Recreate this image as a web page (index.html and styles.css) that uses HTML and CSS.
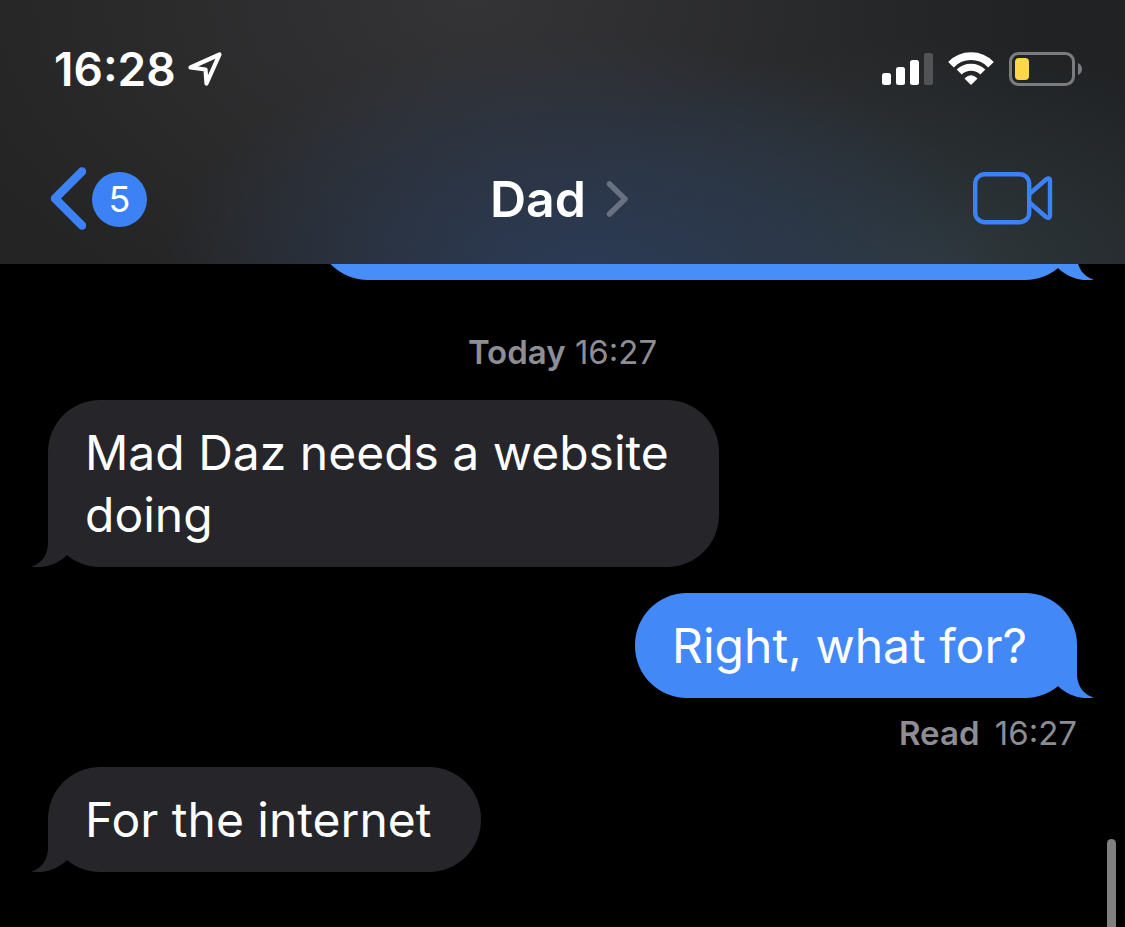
FILE: index.html
```
<!DOCTYPE html>
<html lang="en">
<head>
    <meta charset="UTF-8">
    <meta name="viewport" content="width=device-width, initial-scale=1">
    <title>Messages | Dad</title>
    <link rel="stylesheet" href="styles.css">
</head>
<body>
<header class="header">
    <div class="status">
        <div class="status-left">
            <time class="clock">16:28</time>
            <svg width="36" height="36" viewBox="0 0 36 36" fill="none" stroke="#fff" stroke-width="4.200" stroke-linejoin="round">
                <path d="M2.500 16.500 L31.500 3.500 L18.500 32.500 L17.500 18.500 Z"/>
            </svg>
        </div>
        <div class="status-right">
            <svg width="52" height="34" viewBox="0 0 52 34" fill="#fff">
                <rect x="1" y="21" width="9" height="12" rx="2.500"/>
                <rect x="15" y="15" width="9" height="18" rx="2.500"/>
                <rect x="29" y="8" width="9" height="25" rx="2.500"/>
                <rect x="43" y="1" width="9" height="32" rx="2.500" fill="#525355"/>
            </svg>
            <svg width="46" height="34" viewBox="0 0 46 34" fill="none" stroke="#fff" stroke-width="7.800">
                <path d="M3 12.700 A27.800 27.800 0 0 1 43 12.700"/>
                <path d="M11.200 20 A17 17 0 0 1 34.800 20" stroke-width="7.200"/>
                <path d="M17 26.500 Q23 21 29 26.500 L23 32.500 Z" fill="#fff" stroke-width="1" stroke-linejoin="round"/>
            </svg>
            <svg width="74" height="34" viewBox="0 0 74 34">
                <rect x="1.500" y="1.500" width="63" height="31" rx="8" fill="none" stroke="#7b7c7e" stroke-width="3"/>
                <rect x="6" y="6" width="14" height="22" rx="4" fill="#fbd749"/>
                <path d="M69 11 Q73 13 73 17 Q73 21 69 23 Z" fill="#7b7c7e"/>
            </svg>
        </div>
    </div>
    <nav class="nav">
        <button class="back" type="button" aria-label="Back, 5 unread">
            <svg width="36" height="64" viewBox="0 0 36 64" fill="none" stroke="currentColor" stroke-width="8.500" stroke-linecap="round" stroke-linejoin="round">
                <path d="M32 4.500 L5 31.500 L32 58.500"/>
            </svg>
            <span class="badge">5</span>
        </button>
        <button class="contact" type="button">
            Dad
            <svg width="23" height="38" viewBox="0 0 23 38" fill="none" stroke="#697180" stroke-width="5.500" stroke-linecap="round" stroke-linejoin="round">
                <path d="M3.500 4 L19 19 L3.500 34"/>
            </svg>
        </button>
        <button class="video" type="button" aria-label="FaceTime">
            <svg width="80" height="54" viewBox="0 0 80 54" fill="none" stroke="currentColor" stroke-width="4.400" stroke-linejoin="round">
                <rect x="2.200" y="2.200" width="54" height="48" rx="9.500"/>
                <path d="M57 21.500 L73 7.500 Q77 5 77 9 V43 Q77 47.500 73 45 L57 31"/>
            </svg>
        </button>
    </nav>
</header>

<main class="chat">
    <div class="bubble sent scrolled">
        <svg class="tail" width="54" height="53" viewBox="0 0 54 53"><path d="M37 0 V29 C37 40 43 50 54 52.500 C41 55 27 50 18 41 L0 20 V0 Z"/></svg>
    </div>
    <p class="stamp"><b>Today</b> 16:27</p>
    <div class="bubble received">
        Mad Daz needs a website<br>doing
        <svg class="tail" width="54" height="53" viewBox="0 0 54 53"><path d="M17 0 V29 C17 40 11 50 0 52.500 C13 55 27 50 36 41 L54 20 V0 Z"/></svg>
    </div>
    <div class="bubble sent">
        Right, what for?
        <svg class="tail" width="54" height="53" viewBox="0 0 54 53"><path d="M37 0 V29 C37 40 43 50 54 52.500 C41 55 27 50 18 41 L0 20 V0 Z"/></svg>
    </div>
    <p class="receipt"><b>Read</b> 16:27</p>
    <div class="bubble received">
        For the internet
        <svg class="tail" width="54" height="53" viewBox="0 0 54 53"><path d="M17 0 V29 C17 40 11 50 0 52.500 C13 55 27 50 36 41 L54 20 V0 Z"/></svg>
    </div>
    <div class="scrollbar"></div>
</main>
</body>
</html>
```
FILE: styles.css
```
* {
    box-sizing: border-box;
}

body {
    margin: 0;
    min-height: 100vh;
    display: flex;
    flex-direction: column;
    background: #000;
    color: #fff;
    font-family: Inter, "Liberation Sans", sans-serif;
}

button {
    padding: 0;
    border: 0;
    background: none;
    font-family: inherit;
    cursor: pointer;
}

svg {
    display: block;
    flex-shrink: 0;
}

/* Header */
.header {
    position: relative;
    z-index: 1;
    background:
        radial-gradient(ellipse 38% 95% at 52% 108%, rgba(44, 62, 92, 0.9), rgba(44, 62, 92, 0.5) 50%, rgba(44, 62, 92, 0)),
        radial-gradient(ellipse 36% 90% at 82% 105%, rgba(50, 62, 66, 0.8), rgba(50, 62, 66, 0)),
        radial-gradient(ellipse 50% 140% at 42% 0%, #343436, rgba(52, 52, 54, 0)),
        linear-gradient(to right, #242424, #202224);
}

.status {
    display: flex;
    justify-content: space-between;
    align-items: center;
    height: 138px;
    padding: 0 42px 0 54px;
}

.status-left {
    display: flex;
    align-items: center;
    gap: 12px;
}

.status-right {
    display: flex;
    align-items: center;
    gap: 15px;
}

.clock {
    font-size: 46px;
    font-weight: 600;
}

.nav {
    display: grid;
    grid-template-columns: 1fr auto 1fr;
    align-items: center;
    height: 126px;
    padding: 0 56px 4px 50px;
}

.back {
    display: flex;
    align-items: center;
    justify-self: start;
    gap: 6px;
    color: #3c82f6;
}

.badge {
    width: 55px;
    height: 55px;
    border-radius: 50%;
    background: #3c82f6;
    color: #fff;
    font-size: 36px;
    line-height: 55px;
}

.contact {
    display: flex;
    align-items: center;
    gap: 20px;
    color: #fff;
    font-size: 50px;
    font-weight: 600;
}

.video {
    justify-self: end;
    padding-right: 16px;
    color: #3c82f6;
}

/* Messages */
.chat {
    position: relative;
    flex: 1;
    display: flex;
    flex-direction: column;
    padding: 0 48px 55px;
}

.bubble {
    position: relative;
    max-width: 66%;
    min-height: 104px;
    padding: 22px 50px 21px 37px;
    border-radius: 52px;
    font-size: 48px;
    line-height: 62px;
}

.received {
    align-self: flex-start;
    background: #26252a;
    color: #fff;
}

.sent {
    align-self: flex-end;
    background: #4388f7;
}

/* last message, mostly hidden under the header */
.scrolled {
    width: 74%;
    max-width: none;
    margin-top: -88px;
    background: #488ef9;
}

.tail {
    position: absolute;
    bottom: 0;
}

.received .tail {
    left: -17px;
    fill: #26252a;
}

.sent .tail {
    right: -17px;
    fill: #4388f7;
}

.scrolled .tail {
    fill: #488ef9;
}

.stamp, .receipt {
    margin: 0;
    color: #8d8d93;
    font-size: 33px;
    line-height: 40px;
}

.stamp b, .receipt b {
    font-weight: 600;
}

.stamp {
    margin: 52px 0 28px;
    text-align: center;
}

.received + .sent {
    margin-top: 26px;
}

.receipt {
    margin: 15px 0 14px;
    text-align: right;
}

.receipt b {
    margin-right: 6px;
}

.scrollbar {
    position: absolute;
    right: 9px;
    bottom: 0;
    width: 9px;
    height: 88px;
    border-radius: 5px 5px 0 0;
    background: #808080;
}
```
